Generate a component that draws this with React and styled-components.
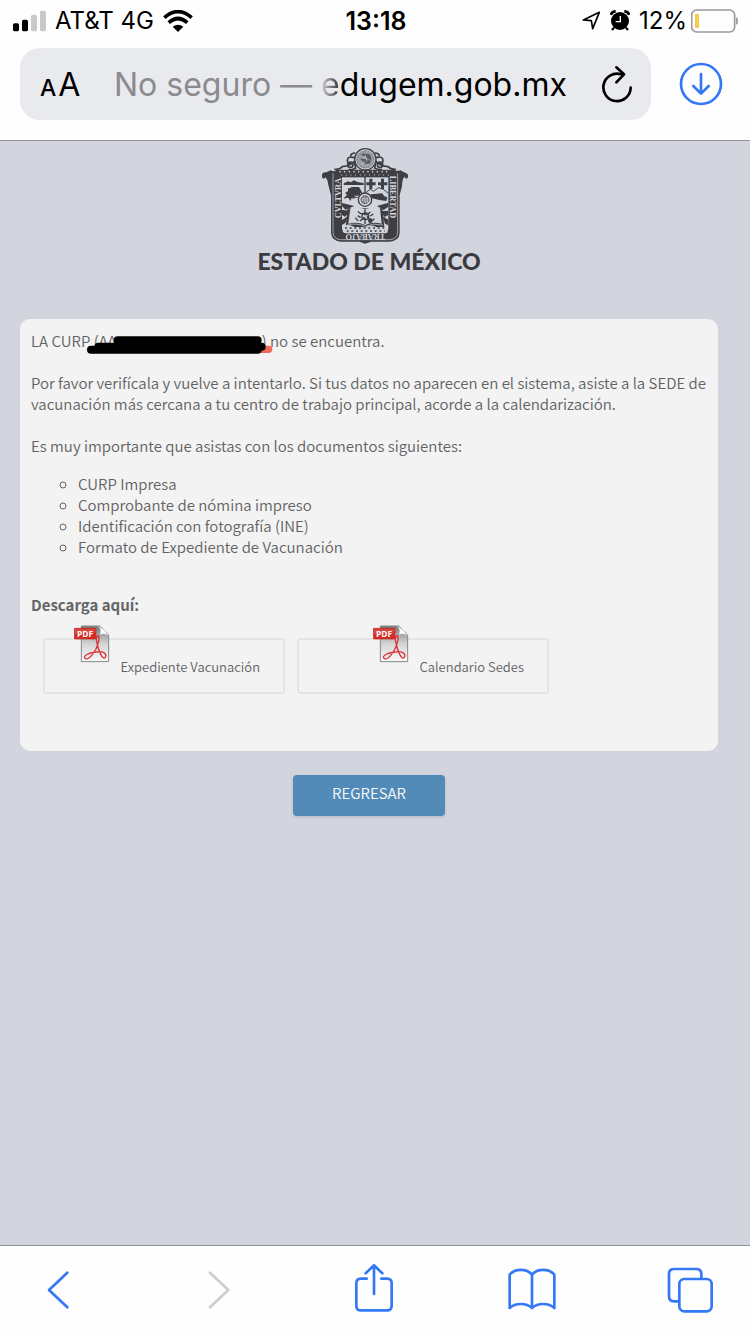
import React from "react";
import styled, { createGlobalStyle } from "styled-components";

const blue = "#3478f6";

const GlobalStyle = createGlobalStyle`
  *, *::before, *::after { box-sizing: border-box; }
  body { margin: 0; background: #d2d5de; }
  button { border: 0; padding: 0; background: none; font: inherit; color: inherit; cursor: pointer; }
  a { color: inherit; text-decoration: none; }
  svg { display: block; flex: none; }
`;

const Screen = styled.div`
  min-height: 100vh;
  display: flex;
  flex-direction: column;
  font-family: Inter, "Liberation Sans", sans-serif;
`;

const Chrome = styled.header`
  background: #fefefe;
  border-bottom: 1px solid #8f9099;
  padding-bottom: 20px;
`;

const StatusBar = styled.div`
  display: grid;
  grid-template-columns: 1fr auto 1fr;
  align-items: center;
  height: 48px;
  padding: 0 11px 7px 13px;
  font-size: 24px;
  line-height: 32px;
  color: #000;
`;

const StatusGroup = styled.div`
  display: flex;
  align-items: center;
  justify-content: ${(p) => (p.$end ? "flex-end" : "flex-start")};
  gap: ${(p) => p.$gap}px;
`;

const Clock = styled.time`
  font-weight: 600;
  font-size: 25px;
`;

const AddressRow = styled.div`
  display: flex;
  align-items: center;
  gap: 28px;
  padding: 0 27px 0 20px;
`;

const AddressField = styled.div`
  flex: 1;
  display: flex;
  align-items: center;
  height: 72px;
  padding: 0 18px 0 20px;
  border-radius: 20px;
  background: #e9eaee;
`;

const TextSizeButton = styled.button`
  display: flex;
  align-items: baseline;
  gap: 2px;
  width: 74px;
`;

const SmallA = styled.span`
  font-size: 23px;
  font-weight: 500;
`;

const BigA = styled.span`
  font-size: 32px;
`;

const Address = styled.button`
  flex: 1;
  padding-top: 2px;
  text-align: left;
  white-space: pre;
  font-size: 32px;
  line-height: 40px;
  color: #000;
`;

const Warning = styled.span`
  color: #8b8b8e;
`;

const FadedLetter = styled.span`
  background: linear-gradient(90deg, #d0d0d4, #333);
  background-clip: text;
  color: transparent;
`;

const IconButton = styled.button`
  display: flex;
  align-items: center;
  justify-content: center;
  color: ${(p) => p.$color || blue};
`;

const Page = styled.main`
  flex: 1;
  padding: 2px 32px 40px 20px;
  font-family: "Noto Sans CJK SC", "Noto Sans", sans-serif;
  font-size: 15px;
  font-weight: 350;
  line-height: 21px;
  color: #626262;
`;

const Brand = styled.div`
  display: flex;
  flex-direction: column;
  align-items: center;
  margin-bottom: 44px;
`;

const BrandName = styled.h1`
  margin: 0;
  font-family: Lato, sans-serif;
  font-weight: 900;
  font-size: 23px;
  line-height: 28px;
  color: #3b3b3f;
`;

const Card = styled.section`
  padding: 11px 11px 57px;
  border-radius: 10px;
  background: #f3f3f3;
`;

const Paragraph = styled.p`
  margin: 0 0 21px;
`;

const Redacted = styled.span`
  position: relative;
  display: inline-flex;
  justify-content: space-between;
  width: 173px;
`;

const Scribble = styled.svg`
  position: absolute;
  left: -7px;
  top: 4px;
`;

const Documents = styled.ul`
  margin: -4px 0 37px;
  padding: 0 0 0 47px;
  list-style: circle;
`;

const DownloadTitle = styled.h2`
  margin: 0 0 23px;
  font-size: 15px;
  line-height: 21px;
  font-weight: 700;
  color: #666;
`;

const Downloads = styled.div`
  display: flex;
  flex-wrap: wrap;
  gap: 12px;
  padding-left: 12px;
`;

const DownloadLink = styled.a`
  display: flex;
  align-items: flex-start;
  justify-content: flex-end;
  gap: 11px;
  width: ${(p) => p.$width}px;
  height: 56px;
  padding-right: 23px;
  border: 2px solid #e4e4e5;
  border-radius: 4px;
  font-size: 13px;

  svg { margin-top: -15px; }
  span { margin-top: 16px; }
`;

const BackButton = styled.button`
  display: block;
  width: 152px;
  height: 41px;
  margin: 24px auto 0;
  padding-bottom: 7px;
  border-radius: 4px;
  background: #528ab8;
  font-size: 15px;
  color: #f8fafc;
  box-shadow: 0 1px 3px rgba(0, 0, 0, 0.15);
`;

const BottomBar = styled.nav`
  display: flex;
  align-items: center;
  justify-content: space-between;
  height: 89px;
  padding: 0 36px 0 34px;
  border-top: 1px solid #8f9099;
  background: #fefefe;

  button { width: 48px; }
`;

function Signal() {
  return (
    <svg width="33" height="22" viewBox="0 0 99 66" aria-hidden="true">
      <rect x="0" y="40" width="18" height="24" rx="5" fill="#000" />
      <rect x="27" y="29" width="18" height="35" rx="5" fill="#000" />
      <rect x="54" y="14" width="18" height="50" rx="5" fill="#c9c9cb" />
      <rect x="81" y="2" width="18" height="62" rx="5" fill="#c9c9cb" />
    </svg>
  );
}

function Wifi() {
  return (
    <svg width="30" height="22" viewBox="0 0 90 66" aria-hidden="true">
      <g fill="none" stroke="#000" strokeWidth="11">
        <path d="M4 23Q45-13 86 23" />
        <path d="M17 38Q45 13 73 38" />
      </g>
      <path d="M29 50Q45 38 61 50L45 66Z" />
    </svg>
  );
}

function LocationArrow() {
  return (
    <svg width="19" height="19" viewBox="0 0 57 57" aria-hidden="true">
      <path d="M4 27L52 4L32 53L28 29Z" fill="none" stroke="#000" strokeWidth="5" strokeLinejoin="round" />
    </svg>
  );
}

function Alarm() {
  return (
    <svg width="20" height="21" viewBox="0 0 60 63" aria-hidden="true">
      <circle cx="30" cy="33" r="27" />
      <path d="M12 53L6 60M48 53L54 60" stroke="#000" strokeWidth="7" />
      <path d="M3 15Q5 4 17 4M43 4Q55 4 57 15" stroke="#000" strokeWidth="8" fill="none" />
      <path d="M31 18V35H17" stroke="#fff" strokeWidth="4" fill="none" />
    </svg>
  );
}

function Battery() {
  return (
    <svg width="48" height="24" viewBox="0 0 144 72" aria-hidden="true">
      <rect x="2" y="3" width="129" height="66" rx="15" fill="none" stroke="#9b9b9d" strokeWidth="5" />
      <rect x="12" y="14" width="12" height="43" rx="4" fill="#f7cd46" />
      <path d="M137 26Q143 36 137 46Z" fill="#9b9b9d" stroke="#9b9b9d" strokeWidth="3" />
    </svg>
  );
}

function Reload() {
  return (
    <svg width="32" height="38" viewBox="0 0 96 114" fill="none" stroke="currentColor" strokeWidth="8" strokeLinecap="round" strokeLinejoin="round" aria-hidden="true">
      <path d="M89 68A41 41 0 1 1 60 28L66 28" />
      <path d="M46 7L69 28L46 52" />
    </svg>
  );
}

function DownloadCircle() {
  return (
    <svg width="44" height="44" viewBox="0 0 132 132" fill="none" stroke="currentColor" strokeWidth="8" strokeLinecap="round" strokeLinejoin="round" aria-hidden="true">
      <circle cx="66" cy="66" r="60" />
      <path d="M66 36V94M43 72L66 95L89 72" />
    </svg>
  );
}

function Crest() {
  const ink = "#3f3f43";
  const paper = "#d2d5de";
  return (
    <svg width="118" height="104" viewBox="0 0 354 312" role="img" aria-label="Escudo del Estado de México">
      <path d="M36 101Q34 87 49 88L62 82Q73 88 80 80L252 80Q260 86 271 82L287 90Q298 94 293 104Q289 111 283 101Q276 111 276 130L269 157V271Q267 294 240 296H184L165 302L148 296H91Q66 294 63 270V157L55 126Q54 113 47 103Q39 112 36 101Z" fill={ink} />
      <path d="M73 79Q88 81 97 71Q121 68 133 55L137 75Q124 83 116 79M258 79Q242 80 234 71Q211 69 198 55L194 75Q207 82 216 79" fill={paper} stroke={ink} strokeWidth="5" />
      <g fill="none" stroke={ink} strokeWidth="5">
        <path d="M134 44Q113 38 112 52Q112 63 123 60M196 44Q218 38 219 52Q219 63 208 60" />
        <circle cx="121" cy="65" r="8" />
        <circle cx="210" cy="65" r="8" />
        <path d="M136 30Q122 30 122 40M194 30Q208 30 208 40" />
      </g>
      <circle cx="166" cy="49" r="32" fill={paper} stroke={ink} strokeWidth="4" />
      <circle cx="166" cy="49" r="26" fill="#9c9ea6" stroke={ink} strokeWidth="2" strokeDasharray="3 2" />
      <path d="M152 35Q160 27 169 33Q180 30 184 44L181 59Q171 70 160 63L168 56Q154 57 151 46Q164 51 170 43Z" fill="#5a5b61" />
      <path d="M154 62L176 65M159 42L178 51M165 35L171 56" stroke={paper} strokeWidth="2" />
      <path d="M69 91V267Q70 288 91 290H240Q262 288 263 267V91" fill="none" stroke={paper} strokeWidth="2" />
      <g fill={paper}>
        {[90, 104, 118, 132, 146, 160, 174, 188, 202, 216, 230].map((x) => (
          <path key={x} d={`M${x} 83l3 3-3 3-3-3zM${x + 5} 94l2 2-2 2-2-2z`} />
        ))}
      </g>
      <rect x="96" y="103" width="139" height="157" fill={paper} />
      <path d="M165 101V184" stroke={ink} strokeWidth="4" />
      <g fill={ink}>
        <path d="M101 121L114 115L122 118L132 112L142 117L161 120V126H101Z" />
        <path d="M113 145L124 132H147L157 149L150 151L157 158H131L146 164H101L112 157L105 150Z" />
        <path d="M114 136H124L123 151L134 168L125 165L121 174L114 163L102 168L114 151Z" />
        <path d="M178 107H187V118H197V127H187V138H178V127H169V118H178ZM213 107H222V118H232V127H222V138H213V127H204V118H213Z" />
        <path d="M169 147L181 139L191 145L205 134L220 139L235 151" fill="none" stroke={ink} strokeWidth="3" />
        <path d="M182 154L217 151L222 159L232 163L229 174L208 171L180 164Z" />
      </g>
      <path d="M96 180L133 189L107 200L96 190ZM96 201L122 203L105 221L96 216ZM96 231L115 219L106 240L96 246ZM235 179L201 189L221 201L235 191ZM235 203L210 205L224 222L235 216ZM235 230L217 219L225 242L235 247Z" fill={ink} />
      <path d="M113 196H217L223 252H107Z" fill={ink} />
      <path d="M122 196Q145 190 165 199Q186 190 210 196L215 242Q189 235 165 246Q142 235 116 242Z" fill={paper} />
      <path d="M111 246Q143 239 165 250Q190 239 219 246M122 196L116 242M127 195L122 239M205 195L210 239" stroke={paper} strokeWidth="2" fill="none" />
      <g fill="none" stroke={ink} strokeWidth="4">
        <path d="M165 199V243M144 205Q151 215 163 212L184 233M150 234L181 207M143 218L152 224M181 219L190 213M136 224L145 234M187 233L193 227" />
        <circle cx="166" cy="220" r="10" />
      </g>
      <circle cx="166" cy="220" r="4" fill={paper} />
      <circle cx="181" cy="233" r="7" fill={ink} />
      <circle cx="165" cy="170" r="20" fill={paper} stroke={ink} strokeWidth="4" />
      <circle cx="165" cy="170" r="12" fill="#888a91" stroke={ink} strokeWidth="3" strokeDasharray="4 2" />
      <path d="M157 174V165L165 169L173 165V177H165V170" fill="none" stroke={paper} strokeWidth="2" />
      <path d="M98 250Q115 241 133 252T166 253T199 252T233 250V267Q232 271 223 271H106Q98 270 98 265Z" fill={paper} />
      <path d="M105 255H228M110 264H224" stroke={ink} strokeWidth="4" strokeDasharray="6 8" />
      <g fill={paper} fontFamily="Liberation Serif, serif" fontWeight="700" fontSize="25">
        <text transform="translate(92 226) rotate(-90)">CVLTVRA</text>
        <text transform="translate(239 98) rotate(90)">LIBERTAD</text>
        <text transform="translate(226 274) rotate(180)">TRABAJO</text>
      </g>
    </svg>
  );
}

function PdfIcon() {
  return (
    <svg width="36" height="38" viewBox="0 0 108 114" aria-hidden="true">
      <defs>
        <linearGradient id="sheet" x1="0" y1="0" x2="0" y2="1">
          <stop offset="0" stopColor="#777979" />
          <stop offset=".5" stopColor="#d4d4d4" />
          <stop offset="1" stopColor="#fafafa" />
        </linearGradient>
      </defs>
      <path d="M22 3H77L104 29V110H22Z" fill="url(#sheet)" stroke="#858888" strokeWidth="3" />
      <path d="M73 3Q84 14 78 28Q92 23 104 31L90 15Z" fill="#fff" stroke="#d5d5d5" strokeWidth="1" />
      <path d="M68 37C74 26 78 36 73 53C66 81 45 105 35 101C22 95 44 82 67 81C88 77 100 87 94 97C85 107 73 75 68 50C66 42 67 39 68 37Z" fill="none" stroke="#dd3237" strokeWidth="4" />
      <rect x="1" y="10" width="65" height="32" rx="2" fill="#d62d25" stroke="#bf241e" strokeWidth="2" />
      <path d="M3 12H64V23Q30 20 3 28Z" fill="#e9695f" opacity=".4" />
      <text x="9" y="35" fontFamily="Open Sans, sans-serif" fontWeight="700" fontSize="25" fill="#fff">PDF</text>
    </svg>
  );
}

function BackChevron() {
  return (
    <svg width="24" height="40" viewBox="0 0 72 120" fill="none" stroke="currentColor" strokeWidth="8" strokeLinecap="round" strokeLinejoin="round" aria-hidden="true">
      <path d="M64 8L9 60L64 112" />
    </svg>
  );
}

function ForwardChevron() {
  return (
    <svg width="30" height="40" viewBox="0 0 90 120" fill="none" stroke="currentColor" strokeWidth="8" strokeLinecap="round" strokeLinejoin="round" aria-hidden="true">
      <path d="M27 8L82 60L27 112" />
    </svg>
  );
}

function Share() {
  return (
    <svg width="40" height="54" viewBox="0 0 120 162" fill="none" stroke="currentColor" strokeWidth="8" strokeLinecap="round" strokeLinejoin="round" aria-hidden="true">
      <path d="M38 47H21Q7 47 7 61V128Q7 142 21 142H99Q113 142 113 128V61Q113 47 99 47H82" />
      <path d="M60 93V8M35 31L60 7L85 31" />
    </svg>
  );
}

function Book() {
  return (
    <svg width="48" height="44" viewBox="0 0 144 132" fill="none" stroke="currentColor" strokeWidth="8" strokeLinejoin="round" strokeLinecap="round" aria-hidden="true">
      <path d="M72 20C56 1 21 1 5 20V120C22 104 55 104 72 120C89 104 122 104 139 120V20C123 1 88 1 72 20V120" />
    </svg>
  );
}

function Tabs() {
  return (
    <svg width="46" height="46" viewBox="0 0 138 138" fill="none" stroke="currentColor" strokeWidth="8" aria-hidden="true">
      <path d="M36 103H21Q6 103 6 88V21Q6 6 21 6H88Q103 6 103 21V35" />
      <rect x="37" y="36" width="97" height="97" rx="15" />
    </svg>
  );
}

export default function App() {
  return (
    <Screen>
      <GlobalStyle />
      <Chrome>
        <StatusBar>
          <StatusGroup $gap={9}>
            <Signal />
            <span>AT&amp;T 4G</span>
            <Wifi />
          </StatusGroup>
          <Clock>13:18</Clock>
          <StatusGroup $end $gap={9}>
            <LocationArrow />
            <Alarm />
            <StatusGroup $gap={4}>
              <span>12%</span>
              <Battery />
            </StatusGroup>
          </StatusGroup>
        </StatusBar>
        <AddressRow>
          <AddressField>
            <TextSizeButton aria-label="Tamaño del texto">
              <SmallA>A</SmallA>
              <BigA>A</BigA>
            </TextSizeButton>
            <Address>
              <Warning>No seguro — </Warning>
              <FadedLetter>e</FadedLetter>dugem.gob.mx
            </Address>
            <IconButton $color="#000" aria-label="Recargar">
              <Reload />
            </IconButton>
          </AddressField>
          <IconButton aria-label="Descargas">
            <DownloadCircle />
          </IconButton>
        </AddressRow>
      </Chrome>

      <Page>
        <Brand>
          <Crest />
          <BrandName>ESTADO DE MÉXICO</BrandName>
        </Brand>
        <Card>
          <Paragraph>
            LA CURP{" "}
            <Redacted>
              <span>(AA</span>
              <span>)</span>
              <Scribble width="187" height="20" viewBox="0 0 561 60" aria-hidden="true">
                <path d="M480 46H545" stroke="#f26a5c" strokeWidth="22" strokeLinecap="round" />
                <path d="M12 47H512M34 38H524M92 19H512" stroke="#000" strokeWidth="24" strokeLinecap="round" />
              </Scribble>
            </Redacted>{" "}
            no se encuentra.
          </Paragraph>
          <Paragraph>
            Por favor verifícala y vuelve a intentarlo. Si tus datos no aparecen en el sistema, asiste a la SEDE de
            vacunación más cercana a tu centro de trabajo principal, acorde a la calendarización.
          </Paragraph>
          <Paragraph>Es muy importante que asistas con los documentos siguientes:</Paragraph>
          <Documents>
            <li>CURP Impresa</li>
            <li>Comprobante de nómina impreso</li>
            <li>Identificación con fotografía (INE)</li>
            <li>Formato de Expediente de Vacunación</li>
          </Documents>
          <DownloadTitle>Descarga aquí:</DownloadTitle>
          <Downloads>
            <DownloadLink href="#expediente" $width={242}>
              <PdfIcon />
              <span>Expediente Vacunación</span>
            </DownloadLink>
            <DownloadLink href="#calendario" $width={252}>
              <PdfIcon />
              <span>Calendario Sedes</span>
            </DownloadLink>
          </Downloads>
        </Card>
        <BackButton>REGRESAR</BackButton>
      </Page>

      <BottomBar aria-label="Navegador">
        <IconButton aria-label="Atrás">
          <BackChevron />
        </IconButton>
        <IconButton $color="#cdcdcf" aria-label="Adelante">
          <ForwardChevron />
        </IconButton>
        <IconButton aria-label="Compartir">
          <Share />
        </IconButton>
        <IconButton aria-label="Marcadores">
          <Book />
        </IconButton>
        <IconButton aria-label="Pestañas">
          <Tabs />
        </IconButton>
      </BottomBar>
    </Screen>
  );
}
